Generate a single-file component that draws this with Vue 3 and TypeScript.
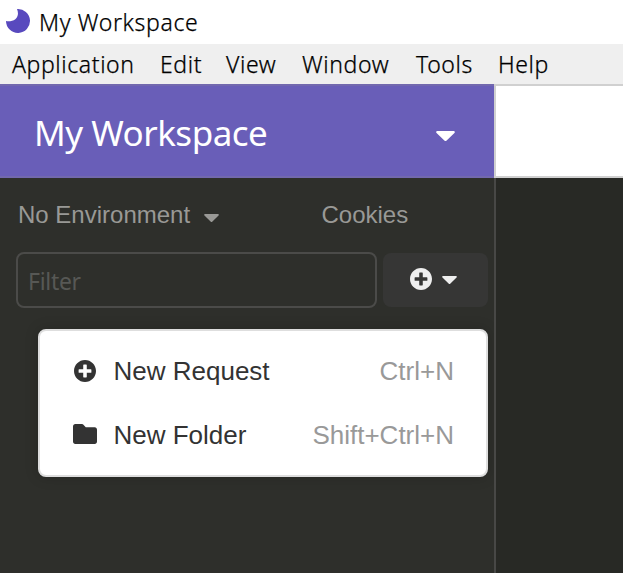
<script setup lang="ts">
interface MenuEntry {
  label: string
  cls: string
}
interface Action {
  label: string
  hint: string
  icon: 'plus' | 'folder'
}

const menu: MenuEntry[] = [
  { label: 'Application', cls: 'm-application' },
  { label: 'Edit', cls: 'm-edit' },
  { label: 'View', cls: 'm-view' },
  { label: 'Window', cls: 'm-window' },
  { label: 'Tools', cls: 'm-tools' },
  { label: 'Help', cls: 'm-help' },
]
const actions: Action[] = [
  { label: 'New Request', hint: 'Ctrl+N', icon: 'plus' },
  { label: 'New Folder', hint: 'Shift+Ctrl+N', icon: 'folder' },
]
const plusPath =
  'M256 8C119 8 8 119 8 256s111 248 248 248 248-111 248-248S393 8 256 8zm144 276c0 6.600-5.400 12-12 12h-92v92c0 6.600-5.400 12-12 12h-56c-6.600 0-12-5.400-12-12v-92h-92c-6.600 0-12-5.400-12-12v-56c0-6.600 5.400-12 12-12h92v-92c0-6.600 5.400-12 12-12h56c6.600 0 12 5.400 12 12v92h92c6.600 0 12 5.400 12 12v56z'
const folderPath =
  'M464 128H272l-54.600-54.600c-6-6-14.100-9.400-22.600-9.400H48C21.500 64 0 85.500 0 112v288c0 26.500 21.500 48 48 48h416c26.500 0 48-21.500 48-48V176c0-26.500-21.500-48-48-48z'
const caretPath =
  'M31.300 192h257.300c17.800 0 26.700 21.500 14.100 34.100L174.100 354.800c-7.800 7.800-20.500 7.800-28.300 0L17.200 226.100C4.600 213.500 13.500 192 31.300 192z'
</script>

<template>
  <div class="window">
    <header class="titlebar">
      <svg class="logo" viewBox="0 0 26 26">
        <path d="M12 1A12 12 0 1 1 1 13C3 13.300 7.500 13.600 10.300 11.200C13.300 8.600 13.600 5 12 1Z" />
      </svg>
      <span class="title">My Workspace</span>
    </header>
    <nav class="menubar">
      <span v-for="m in menu" :key="m.label" class="menu-item" :class="m.cls">{{ m.label }}</span>
    </nav>
    <main class="body">
      <aside class="sidebar">
        <div class="workspace">
          <span class="workspace-name">My Workspace</span>
          <svg class="caret caret-lg" viewBox="8 192 304 169" preserveAspectRatio="none"><path :d="caretPath" /></svg>
        </div>
        <div class="env">
          <span class="env-name">No Environment</span>
          <svg class="caret caret-env" viewBox="8 192 304 169" preserveAspectRatio="none"><path :d="caretPath" /></svg>
          <span class="cookies">Cookies</span>
        </div>
        <div class="filter-row">
          <div class="filter"><span class="placeholder">Filter</span></div>
          <button class="add" type="button">
            <svg class="plus" viewBox="8 8 496 496"><path :d="plusPath" /></svg>
            <svg class="caret caret-sm" viewBox="8 192 304 169" preserveAspectRatio="none"><path :d="caretPath" /></svg>
          </button>
        </div>
        <div class="dropdown">
          <div v-for="a in actions" :key="a.label" class="action">
            <span class="action-icon">
              <svg v-if="a.icon === 'plus'" class="i-plus" viewBox="8 8 496 496"><path :d="plusPath" /></svg>
              <svg v-else class="i-folder" viewBox="0 64 512 384" preserveAspectRatio="none"><path :d="folderPath" /></svg>
            </span>
            <span class="action-label">{{ a.label }}</span>
            <span class="hint">{{ a.hint }}</span>
          </div>
        </div>
      </aside>
      <section class="content">
        <div class="content-divider"></div>
        <div class="content-head"></div>
      </section>
    </main>
  </div>
</template>

<style>
body {
  margin: 0;
  overflow: hidden;
}
</style>

<style scoped>
* {
  box-sizing: border-box;
}
svg {
  display: block;
  flex: none;
  fill: currentColor;
}
.window {
  width: 623px;
  height: 573px;
  display: flex;
  flex-direction: column;
  overflow: hidden;
  background: #fff;
  font-family: "Liberation Sans", Arial, sans-serif;
  white-space: nowrap;
}
.titlebar {
  height: 44px;
  display: flex;
  align-items: center;
  padding: 0 0 2px 5px;
  color: #000;
  font-family: "Noto Sans", sans-serif;
}
.logo {
  width: 26px;
  height: 26px;
  color: #5849be;
}
.title {
  margin-left: 8px;
  font-size: 23px;
  font-weight: 300;
  -webkit-text-stroke: 0.25px #000;
  letter-spacing: 0.65px;
  line-height: 42px;
  padding-top: 2px;
}
.menubar {
  height: 40px;
  display: flex;
  background: #efefef;
  color: #000;
  font-family: "Noto Sans", sans-serif;
  font-size: 23px;
  font-weight: 300;
  -webkit-text-stroke: 0.25px #000;
  letter-spacing: 0.6px;
  line-height: 40px;
  padding-left: 12px;
}
.menu-item {
  flex: none;
}
.m-application { width: 148px; }
.m-edit { width: 66px; }
.m-view { width: 76px; }
.m-window { width: 114px; }
.m-tools { width: 82px; }
.body {
  flex: 1;
  display: flex;
  min-height: 0;
}
.sidebar {
  width: 494px;
  flex: none;
  background: #2e2f2b;
}
.workspace {
  height: 94px;
  display: flex;
  align-items: center;
  justify-content: space-between;
  padding: 4px 39px 0 34px;
  background: #695eb8;
  border-top: 2px solid #7268ae;
  border-bottom: 2px solid #7268ae;
  color: #fff;
}
.workspace-name {
  font-family: "Noto Sans", sans-serif;
  font-size: 35px;
  letter-spacing: -0.5px;
  line-height: 48px;
}
.caret-lg {
  width: 19px;
  height: 10px;
  margin-top: 5px;
}
.env {
  height: 74px;
  display: flex;
  align-items: center;
  padding-left: 18px;
  color: #999996;
  font-size: 24px;
}
.env-name {
  width: 186px;
}
.caret-env {
  width: 15px;
  height: 8px;
  margin-top: 5px;
}
.cookies {
  margin-left: 102.500px;
}
.filter-row {
  display: flex;
  align-items: center;
  gap: 6px;
  padding-left: 16px;
}
.filter {
  width: 361px;
  height: 56px;
  border: 2px solid #4b4b49;
  border-radius: 8px;
  padding: 2px 0 0 10px;
  color: #575855;
  font-family: "Noto Sans", sans-serif;
  font-size: 23px;
  letter-spacing: -0.3px;
  line-height: 51px;
}
.add {
  width: 105px;
  height: 54px;
  display: flex;
  align-items: center;
  border: 0;
  border-radius: 8px;
  background: #363635;
  color: #eee;
  padding: 0 0 2px 27px;
}
.plus {
  width: 22px;
  height: 22px;
}
.caret-sm {
  width: 15px;
  height: 8px;
  margin: 1px 0 0 10px;
}
.dropdown {
  width: 450px;
  height: 148px;
  margin: 21px 0 0 38px;
  padding: 8px 32px 0 31px;
  background: #fff;
  border: 2px solid #dedede;
  border-radius: 8px;
  box-shadow: 0 0 14px rgba(0, 0, 0, 0.18);
  color: #333;
  font-size: 26px;
}
.action {
  height: 64px;
  display: flex;
  align-items: center;
}
.action-icon {
  width: 42.500px;
  display: flex;
}
.i-plus {
  width: 22px;
  height: 22px;
  margin-left: 3px;
}
.i-folder {
  width: 24px;
  height: 20px;
  margin: -2px 0 0 2px;
}
.hint {
  margin-left: auto;
  color: #999;
}
.content {
  flex: 1;
  display: grid;
  grid-template-columns: 2px 1fr;
  background: #282925;
}
.content-divider {
  background: linear-gradient(#d0d0d0 94px, #484846 94px);
}
.content-head {
  height: 94px;
  background: #fff;
  border-top: 2px solid #d0d0d0;
  border-bottom: 2px solid #d0d0d0;
}
</style>
